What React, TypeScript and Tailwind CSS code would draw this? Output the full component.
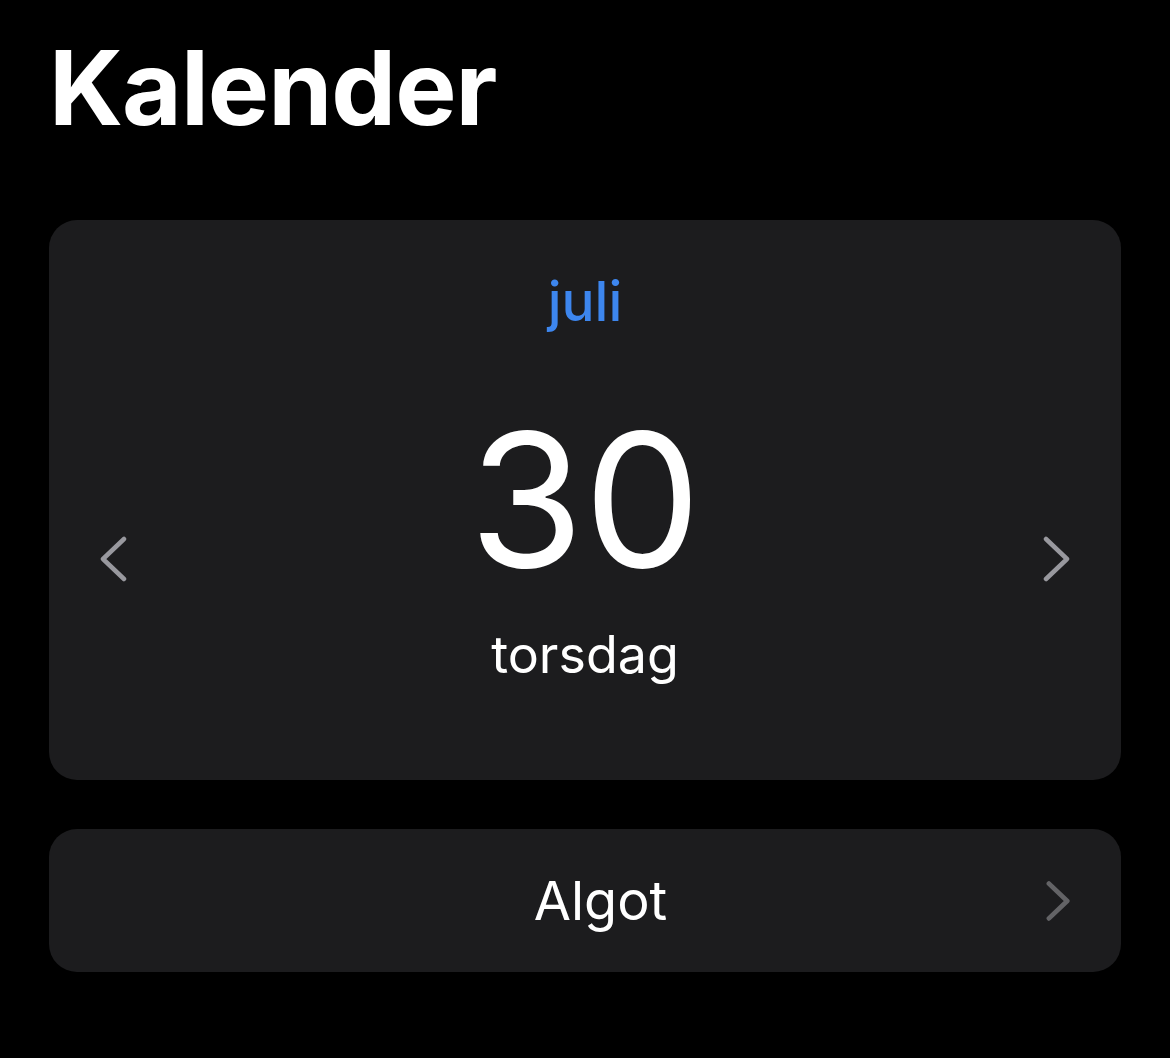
import * as React from "react";

const font = { fontFamily: "Inter, 'Noto Sans', sans-serif" };

const Chevron: React.FC<{ dir: "left" | "right"; className?: string; stroke?: number }> = ({ dir, className, stroke = 4.5 }) => (
  <svg viewBox="0 0 28 46" className={className} fill="none" stroke="currentColor" strokeWidth={stroke} strokeLinecap="round" strokeLinejoin="round">
    {dir === "left" ? <path d="M25 3 L4 23 L25 43" /> : <path d="M3 3 L24 23 L3 43" />}
  </svg>
);

export default function App() {
  return (
    <div className="min-h-[1058px] w-full bg-black px-[49px] pt-[28px] text-white" style={font}>
      <h1 className="text-[103px] font-bold leading-[120px] tracking-[-1px]">Kalender</h1>

      <div className="mt-[72px] flex h-[560px] items-start rounded-[28px] bg-[#1c1c1e] px-[50px]">
        <button className="mt-[316px] text-[#98989e]">
          <Chevron dir="left" className="h-[46px] w-[28px]" />
        </button>
        <div className="flex flex-1 flex-col items-center pt-[54px]">
          <div className="text-[55px] font-medium leading-none text-[#3d86ee]">juli</div>
          <div className="mt-[78px] text-[186px] leading-none">30</div>
          <div className="mt-[36px] text-[52px] leading-none">torsdag</div>
        </div>
        <button className="mt-[316px] text-[#98989e]">
          <Chevron dir="right" className="h-[46px] w-[28px]" />
        </button>
      </div>

      <div className="mt-[49px] flex h-[143px] items-center rounded-[28px] bg-[#1c1c1e] pl-[106px] pr-[50px]">
        <div className="flex-1 text-center text-[54px]">Algot</div>
        <Chevron dir="right" className="h-[40px] w-[25px] text-[#636366]" stroke={5.5} />
      </div>
    </div>
  );
}
